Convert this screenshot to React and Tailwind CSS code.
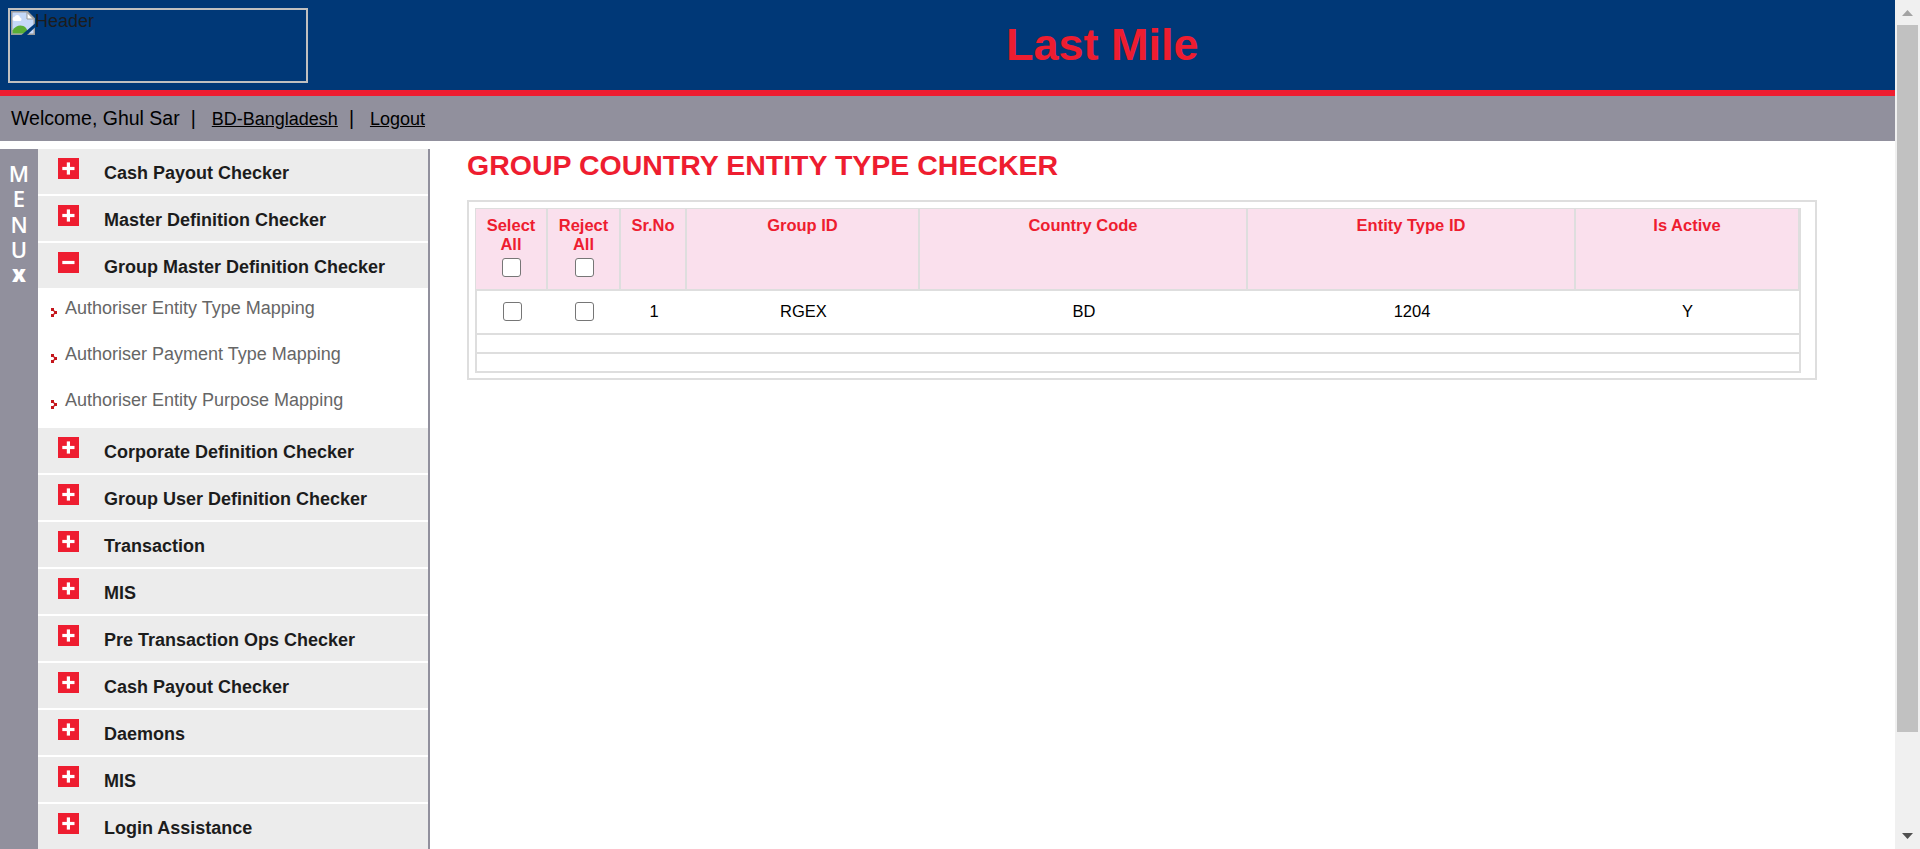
const menuTop = ['Cash Payout Checker', 'Master Definition Checker'];
const subItems = [
  'Authoriser Entity Type Mapping',
  'Authoriser Payment Type Mapping',
  'Authoriser Entity Purpose Mapping',
];
const menuBottom = [
  'Corporate Definition Checker',
  'Group User Definition Checker',
  'Transaction',
  'MIS',
  'Pre Transaction Ops Checker',
  'Cash Payout Checker',
  'Daemons',
  'MIS',
  'Login Assistance',
];

function ToggleIcon({ open }) {
  return (
    <svg width="21" height="21" viewBox="0 0 21 21" className="shrink-0">
      <rect width="21" height="21" fill="#ee1d30" />
      <path d="M4.3 10.5H16.5" stroke="#fff" strokeWidth="3.2" />
      {!open && <path d="M10.4 4.4V16.6" stroke="#fff" strokeWidth="3.2" />}
    </svg>
  );
}

function MenuItem({ label, open }) {
  return (
    <div className="mb-0.5 flex h-[45px] shrink-0 items-start bg-[#ececec] pt-[9px] pl-5">
      <ToggleIcon open={open} />
      <span className="ml-[25px] pt-[5px] text-[18px] leading-[20px] font-bold whitespace-nowrap text-[#1c1c1c]">
        {label}
      </span>
    </div>
  );
}

function SubItem({ label }) {
  return (
    <div className="flex h-[46px] items-start pt-[8px] pl-[13px]">
      <svg width="6" height="9" viewBox="0 0 6 9" className="mt-[10px] shrink-0" shapeRendering="crispEdges">
        <path d="M0 0h3v3h-3zM3 3h3v3h-3zM0 6h3v3h-3z" fill="#c4161c" />
        <path d="M3 2h1v1h-1zM2 3h1v1h-1zM2 5h1v1h-1zM3 6h1v1h-1z" fill="#e59a9c" />
      </svg>
      <span className="ml-2 text-[18px] leading-[20px] whitespace-nowrap text-[#666]">{label}</span>
    </div>
  );
}

function Check({ className = '' }) {
  return (
    <input
      type="checkbox"
      className={`block h-[19px] w-[19px] appearance-none rounded-[3px] border border-[#767676] bg-white ${className}`}
    />
  );
}

function BrokenImage() {
  return (
    <svg width="24" height="24" viewBox="0 0 24 24" className="shrink-0">
      <path d="M0.75 0.75H16.5L23.25 7.5V23.25H0.75Z" fill="#c6d9f8" stroke="#9b9b9b" strokeWidth="1.5" />
      <path d="M3 10a2.2 2.2 0 0 1 .6-4.200A2.800 2.800 0 0 1 9 6.600A1.800 1.800 0 0 1 9.500 10Z" fill="#fff" />
      <path d="M1.500 22.500V19.500C5 14 11 13 15 17L18 22.500Z" fill="#5aae35" />
      <path d="M16 1.500V8H22.500Z" fill="#fff" stroke="#9b9b9b" strokeWidth="1" />
      <path d="M24 12.500V16.500L16 24H10.500Z" fill="#003877" />
    </svg>
  );
}

function Scrollbar() {
  return (
    <div className="flex w-[25px] shrink-0 flex-col items-center bg-[#f0f0f0]">
      <div className="flex h-[25px] items-start pt-[10px]">
        <svg width="11" height="6" viewBox="0 0 11 6">
          <path d="M0 6L5.500 0L11 6Z" fill="#a3a3a3" />
        </svg>
      </div>
      <div className="h-[707px] w-[21px] bg-[#c1c1c1]" />
      <div className="mt-auto flex pb-[10px]">
        <svg width="11" height="6" viewBox="0 0 11 6">
          <path d="M0 0L5.500 6L11 0Z" fill="#505050" />
        </svg>
      </div>
    </div>
  );
}

const headCols = 'grid grid-cols-[72px_73px_66px_233px_328px_328px_1fr]';
const bodyCols = 'grid grid-cols-[71px_73px_66px_233px_328px_328px_1fr]';
const th = 'border-r-2 border-[#dedede] pt-[7px] text-center';

export default function App() {
  return (
    <div className="flex h-[849px] w-[1920px] overflow-hidden bg-white font-['Liberation_Sans',Arial,sans-serif]">
      <div className="flex w-[1895px] flex-col">
        <header className="flex h-24 shrink-0 items-start border-b-[6px] border-[#ee1d30] bg-[#003877]">
          <div className="mt-2 ml-2 flex h-[75px] w-[300px] items-start border-2 border-[#c0c0c0] p-px text-[18px] leading-[20px] text-[#1c1c1c]">
            <BrokenImage />
            <span>Header</span>
          </div>
          <h1 className="ml-[698px] pt-[19px] text-[45px] leading-[51px] font-bold whitespace-nowrap text-[#ee1d30]">
            Last Mile
          </h1>
        </header>

        <div className="flex h-[45px] shrink-0 items-start bg-[#91909d] pl-[11px] leading-[22px] whitespace-nowrap text-black">
          <span className="pt-[11px] text-[19.5px]">Welcome, Ghul Sar</span>
          <span className="ml-[11px] pt-[11px] text-[19.5px]">|</span>
          <a className="ml-[16px] pt-[12px] text-[18px] underline">BD-Bangladesh</a>
          <span className="ml-[11px] pt-[11px] text-[19.5px]">|</span>
          <a className="ml-[16px] pt-[12px] text-[18px] underline">Logout</a>
        </div>

        <div className="mt-2 flex min-h-0 flex-1">
          <div className="flex w-[38px] shrink-0 flex-col items-center bg-[#91909d] pt-[12px] font-['Open_Sans',sans-serif] text-[22px] leading-[25.4px] font-semibold text-white">
            <span>M</span>
            <span>E</span>
            <span>N</span>
            <span>U</span>
            <span className="-mt-[2px] font-extrabold">x</span>
          </div>

          <nav className="flex w-[392px] shrink-0 flex-col overflow-hidden border-r-2 border-[#91909d]">
            {menuTop.map((m) => (
              <MenuItem key={m} label={m} />
            ))}
            <MenuItem label="Group Master Definition Checker" open />
            <div className="h-[138px] shrink-0">
              {subItems.map((s) => (
                <SubItem key={s} label={s} />
              ))}
            </div>
            {menuBottom.map((m, i) => (
              <MenuItem key={i} label={m} />
            ))}
          </nav>

          <main className="ml-[37px] w-[1350px]">
            <h2 className="h-[51px] text-[28.5px] leading-[32px] font-bold whitespace-nowrap text-[#ee1d30]">
              GROUP COUNTRY ENTITY TYPE CHECKER
            </h2>
            <div className="h-[180px] border-2 border-[#dedede] pt-[6px] pl-[6px]">
              <div className="w-[1326px] text-[16.5px] leading-[19px]">
                <div
                  className={`${headCols} h-[83px] border-t border-r border-b-2 border-l border-[#dedede] bg-[#fae0ed] font-bold text-[#ee1d30]`}
                >
                  <div className={th}>
                    Select
                    <br />
                    All
                    <Check className="mt-[4px] ml-[26px]" />
                  </div>
                  <div className={th}>
                    Reject
                    <br />
                    All
                    <Check className="mt-[4px] ml-[27px]" />
                  </div>
                  <div className={th}>Sr.No</div>
                  <div className={th}>Group ID</div>
                  <div className={th}>Country Code</div>
                  <div className={th}>Entity Type ID</div>
                  <div className={th}>Is Active</div>
                </div>
                <div className="border-x-2 border-[#dedede]">
                  <div className={`${bodyCols} h-[44px] border-b-2 border-[#dedede] pt-[11px] text-center text-black`}>
                    <Check className="ml-[26px]" />
                    <Check className="ml-[27px]" />
                    <span>1</span>
                    <span>RGEX</span>
                    <span>BD</span>
                    <span>1204</span>
                    <span>Y</span>
                  </div>
                  <div className="h-[19px] border-b-2 border-[#dedede]" />
                  <div className="h-[19px] border-b-2 border-[#dedede]" />
                </div>
              </div>
            </div>
          </main>
        </div>
      </div>
      <Scrollbar />
    </div>
  );
}
